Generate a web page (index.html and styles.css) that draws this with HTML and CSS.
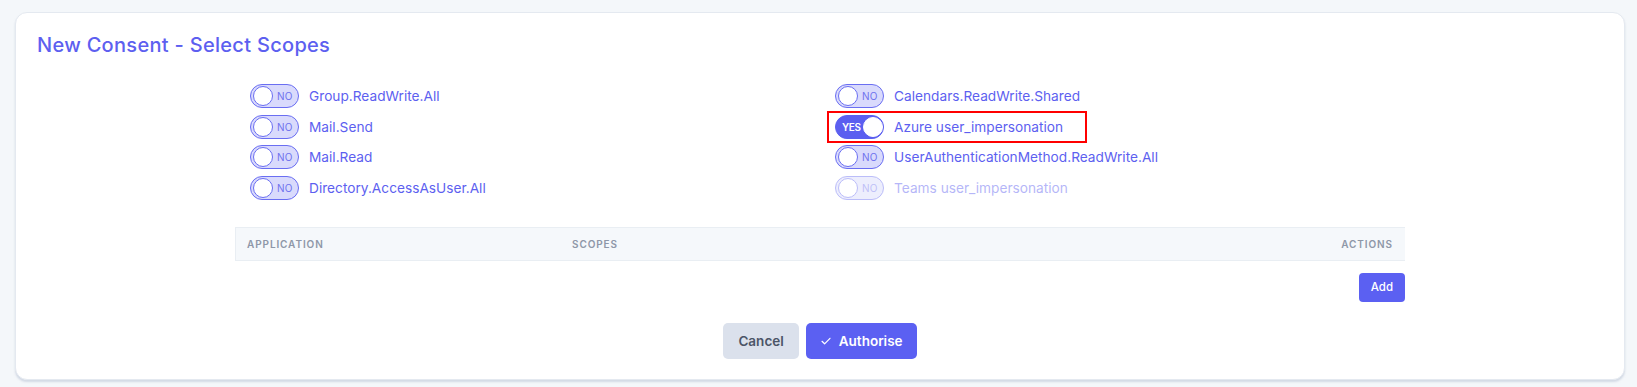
FILE: index.html
```html
<!DOCTYPE html>
<html lang="en">
<head>
    <meta charset="UTF-8">
    <meta name="viewport" content="width=device-width, initial-scale=1.0">
    <title>New Consent</title>
    <link rel="stylesheet" href="styles.css">
</head>
<body>
    <div class="card">
        <h1 class="card-title">New Consent - Select Scopes</h1>

        <div class="content">
            <!-- Scope toggles -->
            <div class="scopes">
                <label class="scope">
                    <span class="toggle"><span class="knob"></span><span class="state">NO</span></span>
                    <span class="scope-name">Group.ReadWrite.All</span>
                </label>
                <label class="scope">
                    <span class="toggle"><span class="knob"></span><span class="state">NO</span></span>
                    <span class="scope-name">Calendars.ReadWrite.Shared</span>
                </label>
                <label class="scope">
                    <span class="toggle"><span class="knob"></span><span class="state">NO</span></span>
                    <span class="scope-name">Mail.Send</span>
                </label>
                <label class="scope highlighted">
                    <span class="toggle on"><span class="state">YES</span><span class="knob"></span></span>
                    <span class="scope-name">Azure user_impersonation</span>
                </label>
                <label class="scope">
                    <span class="toggle"><span class="knob"></span><span class="state">NO</span></span>
                    <span class="scope-name">Mail.Read</span>
                </label>
                <label class="scope">
                    <span class="toggle"><span class="knob"></span><span class="state">NO</span></span>
                    <span class="scope-name">UserAuthenticationMethod.ReadWrite.All</span>
                </label>
                <label class="scope">
                    <span class="toggle"><span class="knob"></span><span class="state">NO</span></span>
                    <span class="scope-name">Directory.AccessAsUser.All</span>
                </label>
                <label class="scope disabled">
                    <span class="toggle"><span class="knob"></span><span class="state">NO</span></span>
                    <span class="scope-name">Teams user_impersonation</span>
                </label>
            </div>

            <!-- Consent table -->
            <table class="consent-table">
                <thead>
                    <tr>
                        <th class="col-app">Application</th>
                        <th class="col-scopes">Scopes</th>
                        <th class="col-actions">Actions</th>
                    </tr>
                </thead>
            </table>
            <div class="table-actions">
                <button class="btn btn-primary btn-small">Add</button>
            </div>
        </div>

        <div class="footer">
            <button class="btn btn-light">Cancel</button>
            <button class="btn btn-primary">
                <svg width="12" height="12" viewBox="0 0 12 12" fill="none" stroke="currentColor" stroke-width="1.2" stroke-linecap="round" stroke-linejoin="round"><path d="M2 6.3l2.6 2.5L10 3.3"/></svg>
                Authorise
            </button>
        </div>
    </div>
</body>
</html>
```

FILE: styles.css
```css
body {
    font-family: "Inter", "Open Sans", sans-serif;
    background-color: #f4f7fa;
    margin: 0;
    padding: 12px 12px 7px 15px;
}

.card {
    background-color: #fff;
    border: 1px solid #e4e9f0;
    border-radius: 12px;
    box-shadow: 0 2px 2px rgba(180, 190, 210, 0.5);
    width: 1610px;
    height: 368px;
    box-sizing: border-box;
    padding: 18px 21px 0;
}

.card-title {
    margin: 0;
    font-size: 20px;
    font-weight: 500;
    color: #5d5ff0;
    line-height: 28px;
    letter-spacing: 0.3px;
}

.content {
    width: 1170px;
    margin: 25px auto 0;
}

/* Scope toggles */
.scopes {
    display: grid;
    grid-template-columns: 1fr 1fr;
    row-gap: 6.5px;
}

.scope {
    display: flex;
    align-items: center;
    gap: 10px;
    padding-left: 15px;
    height: 24px;
    cursor: pointer;
}

.scope.highlighted {
    justify-self: start;
    outline: 2px solid #f00;
    outline-offset: 2px;
    margin-left: 11px;
    padding: 0 20px 0 4px;
}

.scope.disabled {
    opacity: 0.45;
}

.toggle {
    display: flex;
    align-items: center;
    width: 49px;
    height: 24px;
    box-sizing: border-box;
    border: 1.5px solid #6a6ef2;
    border-radius: 12px;
    background-color: #d9dafc;
    padding: 0 2px;
    gap: 4px;
}

.knob {
    width: 18px;
    height: 18px;
    border-radius: 50%;
    background-color: #fff;
    border: 1.5px solid #6a6ef2;
    flex-shrink: 0;
}

.state {
    font-size: 10px;
    color: #6f72ee;
    letter-spacing: 0.2px;
}

.toggle.on {
    background-color: #5b5ff0;
    border-color: #5b5ff0;
    padding-left: 6px;
    gap: 2px;
}

.toggle.on .state {
    color: #fff;
    font-weight: 600;
    letter-spacing: -0.3px;
}

.toggle.on .knob {
    border-color: #fff;
}

.scope-name {
    font-size: 13.7px;
    color: #5d5ff0;
}

/* Table */
.consent-table {
    width: 100%;
    border-collapse: collapse;
    margin-top: 27px;
}

.consent-table th {
    background-color: #f5f8fb;
    border-top: 1px solid #e9eef3;
    border-bottom: 1px solid #e9eef3;
    height: 32px;
    padding: 0 11px;
    font-size: 10px;
    font-weight: 600;
    color: #8e97a8;
    text-transform: uppercase;
    letter-spacing: 0.9px;
    text-align: left;
}

.consent-table .col-app {
    width: 303px;
    border-left: 1px solid #e9eef3;
}

.consent-table .col-actions {
    text-align: right;
    padding-right: 12px;
}

.table-actions {
    display: flex;
    justify-content: flex-end;
    margin-top: 12px;
}

/* Buttons */
.btn {
    display: inline-flex;
    align-items: center;
    gap: 7px;
    border: none;
    border-radius: 5px;
    font-family: inherit;
    font-size: 13.5px;
    font-weight: 600;
    height: 36px;
    cursor: pointer;
}

.btn-primary {
    background-color: #5b60f2;
    color: #fff;
    padding: 0 14px;
}

.btn-light {
    background-color: #dbe1ec;
    color: #4b5567;
    padding: 0 15px;
}

.btn-small {
    height: 29px;
    padding: 0 12px;
    font-size: 11.5px;
    font-weight: 500;
    border-radius: 4px;
}

.footer {
    display: flex;
    justify-content: center;
    gap: 7px;
    margin-top: 21px;
}
```
